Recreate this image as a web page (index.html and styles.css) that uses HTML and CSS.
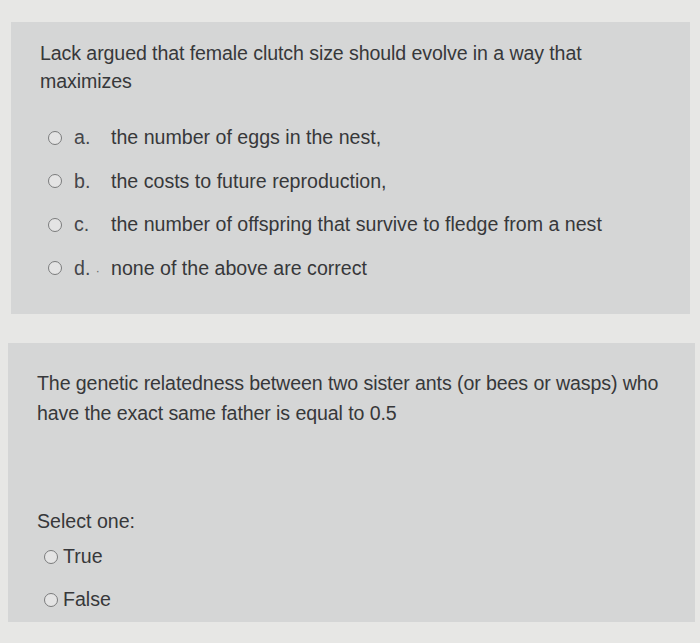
FILE: index.html
```html
<!DOCTYPE html>
<html>
<head>
<meta charset="utf-8">
<link rel="stylesheet" href="styles.css">
</head>
<body>
<div class="page">
  <section class="panel panel-one">
    <p class="question">Lack argued that female clutch size should evolve in a way that<br>maximizes</p>
    <div class="options">
      <div class="opt"><span class="radio"></span><span class="letter">a.</span><span class="txt">the number of eggs in the nest,</span></div>
      <div class="opt"><span class="radio"></span><span class="letter">b.</span><span class="txt">the costs to future reproduction,</span></div>
      <div class="opt"><span class="radio"></span><span class="letter">c.</span><span class="txt">the number of offspring that survive to fledge from a nest</span></div>
      <div class="opt"><span class="radio"></span><span class="letter">d. <span class="dot">·</span></span><span class="txt">none of the above are correct</span></div>
    </div>
  </section>
  <section class="panel panel-two">
    <p class="question q2">The genetic relatedness between two sister ants (or bees or wasps) who<br>have the exact same father is equal to 0.5</p>
    <p class="select">Select one:</p>
    <div class="tf">
      <div class="tf-opt"><span class="radio"></span><span class="tf-txt">True</span></div>
      <div class="tf-opt"><span class="radio"></span><span class="tf-txt">False</span></div>
    </div>
  </section>
</div>
</body>
</html>
```

FILE: styles.css
```css
html, body {
  margin: 0;
  padding: 0;
}
body {
  background: #e7e7e5;
  font-family: "Liberation Sans", Arial, sans-serif;
  color: #37383a;
  width: 700px;
  height: 643px;
  overflow: hidden;
}
.page {
  padding-top: 22px;
}
.panel {
  background: #d5d6d6;
}
.panel-one {
  margin-left: 11px;
  width: 679px;
  height: 292px;
  padding: 17px 0 0 29px;
  box-sizing: border-box;
}
.question {
  margin: 0;
  font-size: 19.6px;
  line-height: 28px;
  letter-spacing: -0.1px;
}
.options {
  margin-top: 21px;
  padding-left: 8px;
}
.opt {
  display: flex;
  align-items: center;
  height: 43.5px;
  font-size: 19.6px;
}
.radio {
  width: 12px;
  height: 12px;
  border: 1.5px solid #7a7b7c;
  border-radius: 50%;
  background: #e4e4e4;
  flex: none;
}
.letter {
  margin-left: 12px;
  width: 37px;
  color: #45464a;
}
.dot {
  font-size: 12px;
  color: #666;
}
.panel-two {
  margin-top: 29px;
  margin-left: 8px;
  width: 687px;
  height: 279px;
  padding: 25px 0 0 29px;
  box-sizing: border-box;
}
.q2 {
  line-height: 30px;
}
.select {
  margin: 79px 0 0 0;
  font-size: 19.6px;
  line-height: 28px;
}
.tf {
  margin-top: 0;
  padding-left: 7px;
}
.tf-opt {
  display: flex;
  align-items: center;
  height: 43px;
  font-size: 19.6px;
}
.tf-txt {
  margin-left: 5px;
}
```
